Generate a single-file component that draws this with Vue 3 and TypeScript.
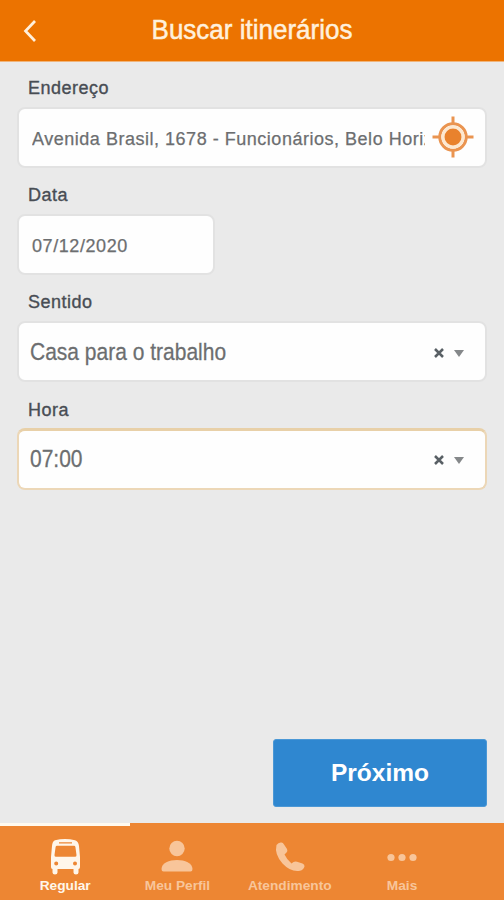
<script setup lang="ts">
import { ref } from 'vue'

interface SelectField {
  id: string
  label: string
  value: string
  focused: boolean
}

const address = 'Avenida Brasil, 1678 - Funcionários, Belo Horizonte'
const date = '07/12/2020'
const selects = ref<SelectField[]>([
  { id: 'sentido', label: 'Sentido', value: 'Casa para o trabalho', focused: false },
  { id: 'hora', label: 'Hora', value: '07:00', focused: true },
])
const tabs = [
  { id: 'bus', label: 'Regular' },
  { id: 'user', label: 'Meu Perfil' },
  { id: 'phone', label: 'Atendimento' },
  { id: 'more', label: 'Mais' },
]
const active = ref('bus')
</script>

<template>
  <div class="screen">
    <header class="header">
      <svg class="back" width="16" height="24" viewBox="0 0 16 24">
        <path d="M13 2 L3.500 12 L13 22" fill="none" stroke="#fff0dc" stroke-width="2.700" />
      </svg>
      <h1 class="title">Buscar itinerários</h1>
    </header>

    <main class="form">
      <section class="field">
        <div class="label">Endereço</div>
        <div class="box">
          <span class="text address">{{ address }}</span>
          <svg class="locate" width="42" height="42" viewBox="0 0 42 42">
            <g fill="none" stroke="#ea9450">
              <circle cx="21" cy="21" r="13.200" stroke-width="3" />
              <path d="M21 .5v8M21 33.500v8M.5 21h8M33.500 21h8" stroke-width="3" />
            </g>
            <circle cx="21" cy="21" r="10" fill="none" stroke="#fde8d0" stroke-width="3" />
            <circle cx="21" cy="21" r="8.500" fill="#e9822d" />
          </svg>
        </div>
      </section>

      <section class="field">
        <div class="label">Data</div>
        <div class="box short"><span class="text">{{ date }}</span></div>
      </section>

      <section v-for="s in selects" :key="s.id" class="field">
        <div class="label">{{ s.label }}</div>
        <div class="box select" :class="{ focused: s.focused }">
          <span class="value">{{ s.value }}</span>
          <svg class="clear" width="10" height="10" viewBox="0 0 10 10">
            <path d="M1 1 L9 9 M9 1 L1 9" stroke="#596065" stroke-width="2.500" />
          </svg>
          <svg class="arrow" width="10" height="7" viewBox="0 0 10 7">
            <path d="M0 0H10L5 7Z" fill="#85888a" />
          </svg>
        </div>
      </section>
    </main>

    <div class="actions">
      <button class="next" type="button">Próximo</button>
    </div>

    <nav class="tabs">
      <div v-for="t in tabs" :key="t.id" class="tab" :class="{ active: t.id === active }" @click="active = t.id">
        <svg v-if="t.id === 'bus'" class="icon" width="32" height="38" viewBox="0 0 32 38">
          <path fill="currentColor" fill-rule="evenodd" d="M6 2.300Q16-.5 26 2.300Q29.500 3.500 30 8L31 19V29Q31 31 29.500 31V34.500Q29.500 36.500 27 36.500Q24.500 36.500 24.500 34.500V31H8.500V34.500Q8.500 36.500 6 36.500Q3.500 36.500 3.500 34.500V31Q2 31 2 29V19L3 8Q3.300 3.500 6 2.300ZM10 4.200V5.500H23V4.200ZM8 7.800Q6.800 7.800 6.600 9L5.500 17Q5.400 18.700 7 18.700H26Q27.600 18.700 27.500 17L26.400 9Q26.200 7.800 25 7.800ZM7.200 23.500A2 2 0 1 0 7.200 27.500A2 2 0 1 0 7.200 23.500ZM26 23.500A2 2 0 1 0 26 27.500A2 2 0 1 0 26 23.500Z" />
        </svg>
        <svg v-else-if="t.id === 'user'" class="icon" width="32" height="38" viewBox="0 0 32 38">
          <circle cx="16" cy="10.500" r="7.700" fill="currentColor" />
          <path d="M.5 31C.5 19 31.500 19 31.500 31Q31.500 33.500 29.500 33.500H2.500Q.5 33.500 .5 31Z" fill="currentColor" />
        </svg>
        <svg v-else-if="t.id === 'phone'" class="icon" width="32" height="38" viewBox="0 0 32 38">
          <path d="M2.500 7Q4.500 4 7.500 4.500Q9 4.500 10 6.500L13 11Q14 13 12.500 14.500L10.500 16.500Q12.500 21 17.500 25.500L19.500 24Q21 23 23 23.700L28.500 25.500Q30.800 26.500 30.500 28.500Q29.500 32 26 32.800Q17 34.500 8.500 25.500Q.2 16 2.500 7Z" fill="currentColor" />
        </svg>
        <svg v-else class="icon" width="32" height="38" viewBox="0 0 32 38">
          <circle cx="5" cy="19.500" r="3.600" fill="currentColor" />
          <circle cx="16" cy="19.500" r="3.600" fill="currentColor" />
          <circle cx="27" cy="19.500" r="3.600" fill="currentColor" />
        </svg>
        <span class="caption">{{ t.label }}</span>
      </div>
    </nav>
  </div>
</template>

<style>
body {
  margin: 0;
  background: #eaeaea;
}
</style>

<style scoped>
.screen {
  box-sizing: border-box;
  display: flex;
  flex-direction: column;
  width: 504px;
  height: 900px;
  overflow: hidden;
  background: #eaeaea;
  font-family: "Liberation Sans", Arial, sans-serif;
}
.header {
  box-sizing: border-box;
  display: grid;
  grid-template-columns: 48px 1fr 48px;
  align-items: center;
  height: 62px;
  border-bottom: 1px solid #f0b47a;
  background: #ec7300;
}
.back {
  margin-left: 22px;
}
.title {
  margin: 0 0 1px;
  color: #fff0dc;
  font-size: 26px;
  font-weight: 400;
  line-height: 30px;
  text-align: center;
  transform: scaleY(1.05);
  -webkit-text-stroke: 0.5px #fff0dc;
}
.form {
  display: flex;
  flex: 1;
  flex-direction: column;
  padding: 13px 17px 0;
}
.field {
  height: 107.2px;
}
.label {
  height: 32px;
  padding-left: 11px;
  color: #484d54;
  font-size: 18px;
  line-height: 27px;
  letter-spacing: 0.5px;
  -webkit-text-stroke: 0.35px #484d54;
}
.box {
  box-sizing: border-box;
  display: flex;
  align-items: center;
  height: 61px;
  padding: 0 10px 0 13px;
  border: 2px solid #e2e2e2;
  border-radius: 8px;
  background: #fefefe;
}
.short {
  width: 198px;
}
.text {
  padding-top: 3px;
  color: #6c6e70;
  font-size: 18px;
  line-height: 24px;
  letter-spacing: 0.58px;
  white-space: nowrap;
  -webkit-text-stroke: 0.25px #6c6e70;
}
.address {
  width: 393px;
  overflow: hidden;
  letter-spacing: 0.52px;
}
.locate {
  flex: none;
  margin: -2px 0 0 7px;
}
.select {
  padding: 0 20px 0 11px;
}
.focused {
  height: 62px;
  margin-top: -1px;
  border-color: #ecd7b7;
  border-top: 3px solid #e8d0a8;
}
.value {
  flex: 1;
  color: #6c6e70;
  font-size: 21px;
  line-height: 26px;
  transform: scaleY(1.1);
  -webkit-text-stroke: 0.25px #6c6e70;
}
.clear {
  margin-top: 2px;
}
.arrow {
  margin: 3px 1px 0 10px;
}
.actions {
  display: flex;
  justify-content: flex-end;
  padding: 0 17px 16px;
}
.next {
  box-sizing: border-box;
  width: 214px;
  height: 68px;
  padding: 0 0 1px;
  border: 1px solid #4b98d6;
  border-radius: 3px;
  background: #2f87d0;
  color: #fff;
  font-family: inherit;
  font-size: 24.5px;
  font-weight: 700;
}
.tabs {
  display: grid;
  grid-template-columns: repeat(4, 112.3px);
  box-sizing: border-box;
  height: 77px;
  padding-left: 9px;
  background: #ed8633;
}
.tab {
  position: relative;
  display: flex;
  flex-direction: column;
  align-items: center;
  padding-top: 15px;
  color: #f8c59a;
}
.active {
  color: #fff6ea;
}
.active::before {
  content: "";
  position: absolute;
  top: 0;
  left: -9px;
  width: 130px;
  height: 3px;
  background: #fffaf0;
}
.icon {
  height: 38px;
}
.caption {
  padding-top: 1px;
  font-size: 13.7px;
  font-weight: 700;
  line-height: 18px;
  white-space: nowrap;
}
</style>
